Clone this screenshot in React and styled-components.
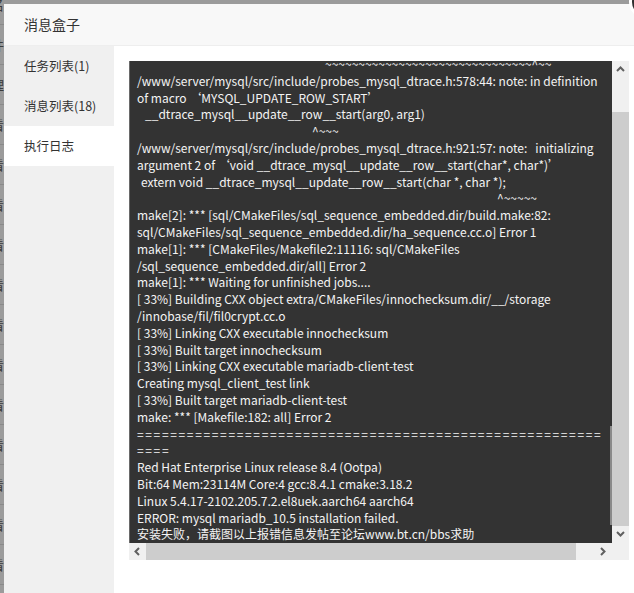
import React from 'react';
import styled, { createGlobalStyle } from 'styled-components';

const GlobalStyle = createGlobalStyle`
  html, body {
    margin: 0;
    padding: 0;
    height: 100%;
    overflow: hidden;
  }
  body {
    background: #9b9b9b;
    font-family: "Noto Sans CJK SC", "Noto Sans", sans-serif;
  }
  #root {
    height: 100%;
  }
`;

const Page = styled.div`
  position: relative;
  height: 100%;
  overflow: hidden;
`;

// the panel page dimmed behind the layer
const BackList = styled.div`
  margin-top: -15px;
`;

const BackRow = styled.div`
  height: 40px;
  box-sizing: border-box;
  border-bottom: 1px solid #8a8a8a;
  display: flex;
  align-items: center;
  font-size: 13px;
  color: #3c3c3c;
  span {
    margin-left: -9px;
  }
`;

const Layer = styled.div`
  position: absolute;
  left: 4px;
  top: 4px;
  width: 640px;
  height: 620px;
  background: #fff;
  display: flex;
  flex-direction: column;
`;

const CloseBtn = styled.span`
  position: absolute;
  left: 625px;
  top: -19px;
  width: 34px;
  height: 34px;
  box-sizing: border-box;
  border-radius: 50%;
  background: #2f2f2f;
  border: 3px solid #fff;
`;

const Title = styled.div`
  height: 41px;
  line-height: 41px;
  padding-left: 20px;
  background: #f8f8f8;
  border-bottom: 1px solid #eee;
  font-size: 14px;
  color: #333;
`;

const Body = styled.div`
  flex: 1;
  display: flex;
`;

const Side = styled.ul`
  width: 110px;
  margin: 0;
  padding: 0;
  list-style: none;
  background: #f0f0f0;
`;

const Tab = styled.li`
  height: 40px;
  line-height: 40px;
  padding-left: 20px;
  font-size: 12.5px;
  color: #333;
  background: ${p => (p.$active ? '#fff' : 'transparent')};
`;

const Main = styled.div`
  flex: 1;
  padding: 15px;
`;

const Frame = styled.div`
  display: grid;
  grid-template-columns: 483px 17px;
  grid-template-rows: 482px 17px;
`;

const Log = styled.div`
  position: relative;
  background: #333;
  border-left: 1px solid #6a6a6a;
  padding-left: 7px;
  overflow: hidden;
  color: #f4f4f4;
  font-size: 12px;
  line-height: 16.8px;
`;

const LogText = styled.div`
  margin-top: -5px;
`;

const Line = styled.div`
  white-space: pre;
  padding-left: ${p => p.$indent || 0}px;
  letter-spacing: ${p => p.$track || 0}px;
`;

const InnerBar = styled.span`
  position: absolute;
  right: 0;
  top: 365px;
  width: 2px;
  height: 99px;
  background: #8a8a8a;
`;

const VBar = styled.div`
  display: flex;
  flex-direction: column;
  background: #f0f0f0;
`;

const HBar = styled.div`
  display: flex;
  background: #f0f0f0;
`;

const Arrow = styled.div`
  width: 17px;
  height: 17px;
  flex: none;
  display: flex;
  align-items: center;
  justify-content: center;
`;

const Track = styled.div`
  flex: ${p => (p.$grow ? 1 : 'none')};
  ${p => p.$size && `flex-basis: ${p.$size}px;`}
`;

const Thumb = styled.div`
  flex: ${p => (p.$grow ? 1 : 'none')};
  ${p => p.$size && `flex-basis: ${p.$size}px;`}
  background: #cdcdcd;
`;

const Corner = styled.div`
  background: #f0f0f0;
`;

const chevrons = {
  up: '1,6 4.5,2.5 8,6',
  down: '1,2 4.5,5.5 8,2',
  left: '6,1 2.5,4.5 6,8',
  right: '2,1 5.5,4.5 2,8',
};

const Chevron = ({ dir }) => (
  <svg width="9" height="9" viewBox="0 0 9 9">
    <polyline points={chevrons[dir]} fill="none" stroke="#606060" strokeWidth="2" />
  </svg>
);

const lines = [
  { t: '~'.repeat(31) + '^~~', indent: 188 },
  { t: '/www/server/mysql/src/include/probes_mysql_dtrace.h:578:44: note: in definition' },
  { t: 'of macro ‘MYSQL_UPDATE_ROW_START’' },
  { t: '__dtrace_mysql__update__row__start(arg0, arg1)', indent: 8 },
  { t: '^~~~', indent: 175 },
  { t: '/www/server/mysql/src/include/probes_mysql_dtrace.h:921:57: note:   initializing' },
  { t: 'argument 2 of ‘void __dtrace_mysql__update__row__start(char*, char*)’' },
  { t: 'extern void __dtrace_mysql__update__row__start(char *, char *);', indent: 4 },
  { t: '^~~~~~', indent: 360 },
  { t: 'make[2]: *** [sql/CMakeFiles/sql_sequence_embedded.dir/build.make:82:' },
  { t: 'sql/CMakeFiles/sql_sequence_embedded.dir/ha_sequence.cc.o] Error 1' },
  { t: 'make[1]: *** [CMakeFiles/Makefile2:11116: sql/CMakeFiles' },
  { t: '/sql_sequence_embedded.dir/all] Error 2' },
  { t: 'make[1]: *** Waiting for unfinished jobs....' },
  { t: '[ 33%] Building CXX object extra/CMakeFiles/innochecksum.dir/__/storage' },
  { t: '/innobase/fil/fil0crypt.cc.o' },
  { t: '[ 33%] Linking CXX executable innochecksum' },
  { t: '[ 33%] Built target innochecksum' },
  { t: '[ 33%] Linking CXX executable mariadb-client-test' },
  { t: 'Creating mysql_client_test link' },
  { t: '[ 33%] Built target mariadb-client-test' },
  { t: 'make: *** [Makefile:182: all] Error 2' },
  { t: '='.repeat(56), track: 1.65 },
  { t: '====', track: 1.65 },
  { t: 'Red Hat Enterprise Linux release 8.4 (Ootpa)' },
  { t: 'Bit:64 Mem:23114M Core:4 gcc:8.4.1 cmake:3.18.2' },
  { t: 'Linux 5.4.17-2102.205.7.2.el8uek.aarch64 aarch64' },
  { t: 'ERROR: mysql mariadb_10.5 installation failed.' },
  { t: '安装失败，请截图以上报错信息发帖至论坛www.bt.cn/bbs求助' },
];

const backChars = ['名', '件', '理', '看', '看', '看', '看', '看', '看', '看', '看', '看', '看', '看', '看', '看'];

export default function App() {
  return (
    <Page>
      <GlobalStyle />
      <BackList>
        {backChars.map((c, i) => (
          <BackRow key={i}><span>{c}</span></BackRow>
        ))}
      </BackList>

      <Layer>
        <CloseBtn />
        <Title>消息盒子</Title>
        <Body>
          <Side>
            <Tab>任务列表(1)</Tab>
            <Tab>消息列表(18)</Tab>
            <Tab $active>执行日志</Tab>
          </Side>
          <Main>
            <Frame>
              <Log>
                <LogText>
                  {lines.map((l, i) => (
                    <Line key={i} $indent={l.indent} $track={l.track}>{l.t}</Line>
                  ))}
                </LogText>
                <InnerBar />
              </Log>
              <VBar>
                <Arrow><Chevron dir="up" /></Arrow>
                <Track $size={34} />
                <Thumb $grow />
                <Arrow><Chevron dir="down" /></Arrow>
              </VBar>
              <HBar>
                <Arrow><Chevron dir="left" /></Arrow>
                <Thumb $size={430} />
                <Track $grow />
                <Arrow><Chevron dir="right" /></Arrow>
              </HBar>
              <Corner />
            </Frame>
          </Main>
        </Body>
      </Layer>
    </Page>
  );
}
